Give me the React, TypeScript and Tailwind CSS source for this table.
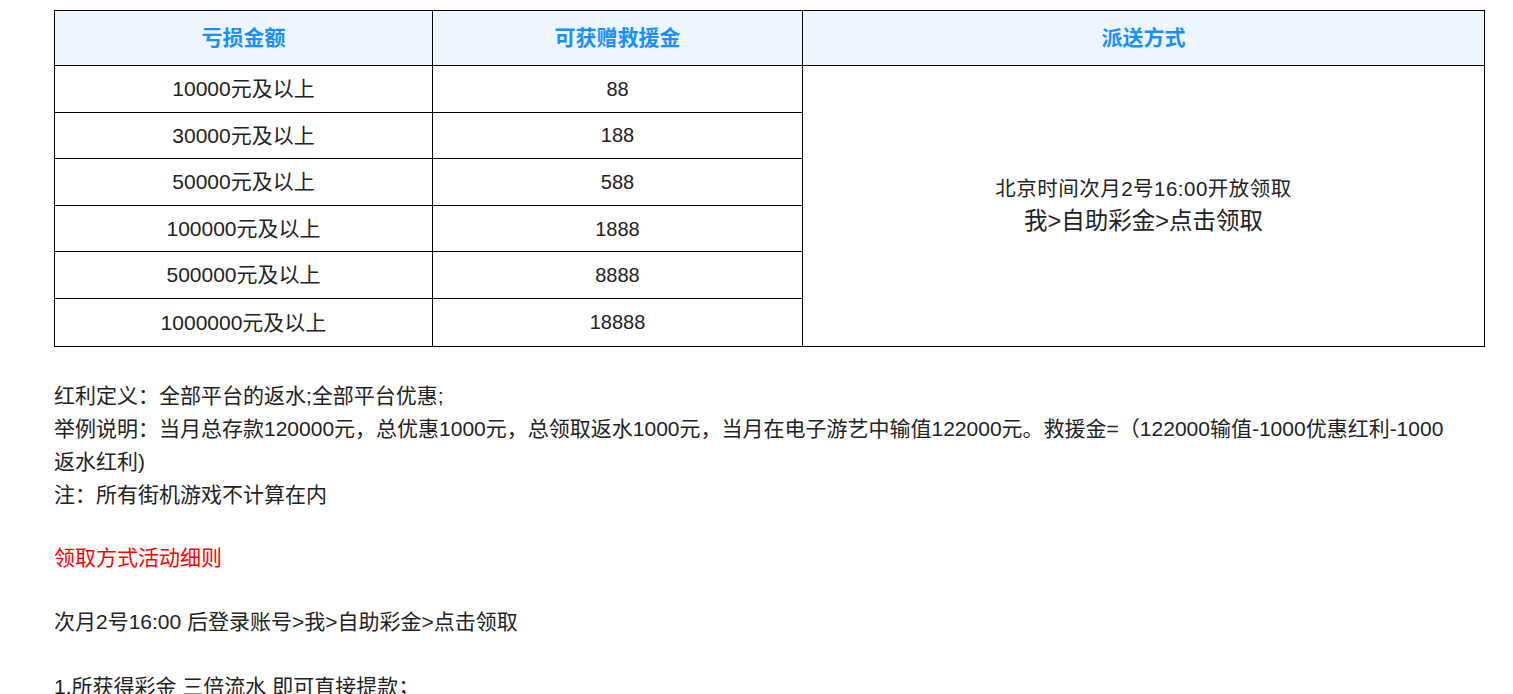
const rows = [
  ["10000元及以上", "88"],
  ["30000元及以上", "188"],
  ["50000元及以上", "588"],
  ["100000元及以上", "1888"],
  ["500000元及以上", "8888"],
  ["1000000元及以上", "18888"],
];

const font = "font-['Liberation_Sans','Noto_Sans_CJK_SC',sans-serif]";

const App = () => {
  return (
    <div className={`min-h-screen bg-white text-[#222] ${font}`}>
      <div className="w-[1431px] ml-[54px] pt-[10px]">
        <table className="w-full border-collapse table-fixed">
          <colgroup>
            <col className="w-[378px]" />
            <col className="w-[370px]" />
            <col />
          </colgroup>
          <thead>
            <tr className="bg-[#eef6ff] h-[55px]">
              <th className="border border-black text-[#1890ff] text-[21px] font-bold">亏损金额</th>
              <th className="border border-black text-[#1890ff] text-[21px] font-bold">可获赠救援金</th>
              <th className="border border-black text-[#1890ff] text-[21px] font-bold">派送方式</th>
            </tr>
          </thead>
          <tbody>
            {rows.map((r, i) => (
              <tr key={r[0]} className={i === 5 ? "h-[48px]" : "h-[46.6px]"}>
                <td className="border border-black text-center text-[21px]">{r[0]}</td>
                <td className="border border-black text-center text-[20px]">{r[1]}</td>
                {i === 0 && (
                  <td rowSpan={6} className="border border-black text-center align-middle">
                    <div className="text-[20.5px] leading-[30px] tracking-[0.5px]">北京时间次月2号16:00开放领取</div>
                    <div className="text-[23.5px] leading-[34px]">我&gt;自助彩金&gt;点击领取</div>
                  </td>
                )}
              </tr>
            ))}
          </tbody>
        </table>

        <div className="mt-[32px] text-[21px] leading-[33px]">
          <p>红利定义：全部平台的返水;全部平台优惠;</p>
          <p className="max-w-[1400px]">
            举例说明：当月总存款120000元，总优惠1000元，总领取返水1000元，当月在电子游艺中输值122000元。救援金=（122000输值-1000优惠红利-1000返水红利)
          </p>
          <p>注：所有街机游戏不计算在内</p>
          <p className="mt-[30px] text-[#ff0000]">领取方式活动细则</p>
          <p className="mt-[31px]">次月2号16:00 后登录账号&gt;我&gt;自助彩金&gt;点击领取</p>
          <p className="mt-[32px]">1.所获得彩金 三倍流水 即可直接提款；</p>
        </div>
      </div>
    </div>
  );
};

export default App;
